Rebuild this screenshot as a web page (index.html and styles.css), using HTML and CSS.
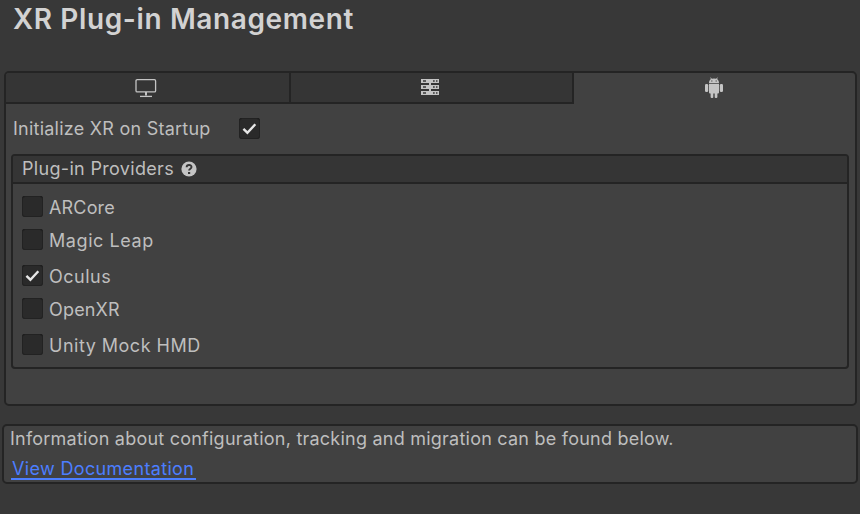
FILE: index.html
```html
<!DOCTYPE html>
<html lang="en">
<head>
<meta charset="utf-8">
<title>XR Plug-in Management</title>
<link rel="stylesheet" href="styles.css">
</head>
<body>
<h1 class="title">XR Plug-in Management</h1>
<section class="panel">
  <nav class="tabs">
    <div class="tab">
      <svg class="icon-monitor" width="22" height="20" viewBox="0 0 22 20" fill="none" stroke="#c4c4c4"><rect x="1" y="1.7" width="19.6" height="12.2" rx="1.2" stroke-width="1.3"/><path d="M11 14v3.5" stroke-width="2"/><path d="M5 18.4h12" stroke-width="1.3"/></svg>
    </div>
    <div class="tab">
      <svg width="18" height="18" viewBox="0 0 18 18"><path fill="#c4c4c4" d="M0 1h18v4H0zM0 7h18v4H0zM0 13h18v4H0zM8 5h2v2H8zM8 11h2v2H8z"/><path fill="#383838" d="M2 2.2h3v1.6H2zM12 2.2h1.7v1.6H12zM15 2.2h1.5v1.6H15zM2 8.2h3v1.6H2zM12 8.2h1.7v1.6H12zM15 8.2h1.5v1.6H15zM2 14.2h3v1.6H2zM12 14.2h1.7v1.6H12zM15 14.2h1.5v1.6H15z"/></svg>
    </div>
    <div class="tab active">
      <svg class="icon-android" width="18" height="22" viewBox="0 0 18 22" fill="#c4c4c4"><path d="M4 6C4 3.8 5 2.7 6.1 2L5 .8l.5-.4L6.9 1.700Q9 1.100 11.100 1.700L12.500.4l.5.4L11.900 2C13 2.700 14 3.800 14 6z"/><path d="M4 6.700h10v8.800q0 1-1 1H5q-1 0-1-1z"/><rect x="0" y="7" width="3.200" height="8" rx="1.300"/><rect x="14.800" y="7" width="3.200" height="8" rx="1.300"/><rect x="5.600" y="15" width="2.700" height="6" rx="1"/><rect x="9.700" y="15" width="2.700" height="6" rx="1"/><path fill="#414141" d="M6.200 3.500h1.200v1H6.200zM10.600 3.500h1.200v1h-1.200z"/></svg>
    </div>
  </nav>
  <div class="startup">
    <span class="startup-label">Initialize XR on Startup</span>
    <span class="check"><svg width="21" height="21" viewBox="0 0 21 21"><path d="M4.400 10.900 8.400 14.700 16.300 6.300"/></svg></span>
  </div>
  <div class="providers">
    <div class="providers-head">
      <span class="head-label">Plug-in Providers</span>
      <svg width="16" height="16" viewBox="0 0 16 16"><circle cx="8" cy="8" r="7.600" fill="#c4c4c4"/><path d="M5.600 6.300C5.700 3.300 10.500 3.300 10.500 6c0 1.700-2.400 1.700-2.400 3.600" fill="none" stroke="#353535" stroke-width="1.900"/><path fill="#353535" d="M7 11h2.200v2H7z"/></svg>
    </div>
    <ul class="list">
      <li><span class="check"></span><span class="tight">ARCore</span></li>
      <li class="wide"><span class="check"></span><span class="loose">Magic Leap</span></li>
      <li><span class="check"><svg width="21" height="21" viewBox="0 0 21 21"><path d="M4.400 10.900 8.400 14.700 16.300 6.300"/></svg></span><span>Oculus</span></li>
      <li class="wide"><span class="check"></span><span class="tight">OpenXR</span></li>
      <li><span class="check"></span><span>Unity Mock HMD</span></li>
    </ul>
  </div>
</section>
<section class="info">
  <p class="info-text">Information about configuration, tracking and migration can be found below.</p>
  <a class="link">View Documentation</a>
</section>
</body>
</html>
```
FILE: styles.css
```css
* { box-sizing: border-box; }
body {
  margin: 0;
  height: 514px;
  overflow: hidden;
  background: #383838;
  color: #bebebe;
  font: 400 18px/22px Inter, "Liberation Sans", sans-serif;
  letter-spacing: 0.5px;
  white-space: nowrap;
}
svg { display: block; flex: none; }
.title {
  margin: 0;
  padding: 1px 0 0 13px;
  height: 71px;
  font-size: 28px;
  line-height: 36px;
  font-weight: 600;
  letter-spacing: 0.62px;
  color: #d2d2d2;
}
.panel {
  width: 853px;
  height: 335px;
  margin-left: 4px;
  border: 2px solid #242424;
  border-radius: 5px;
  background: #414141;
}
.tabs { display: grid; grid-template-columns: 285px 283px 281px; height: 31px; }
.tab {
  display: flex;
  align-items: center;
  justify-content: center;
  padding: 0 3px 1px 0;
  background: #353535;
  border-right: 2px solid #242424;
  border-bottom: 2px solid #242424;
}
.tab:first-child { border-top-left-radius: 3px; }
.tab.active { padding: 0 1px 1px 0; background: none; border: 0; }
.icon-monitor { margin-top: 1px; }
.startup { display: flex; height: 50px; padding: 14px 0 0 7px; }
.startup-label { width: 226px; letter-spacing: 0.24px; }
.check {
  width: 21px;
  height: 21px;
  flex: none;
  border-radius: 3px;
  background: #2a2a2a;
  box-shadow: inset 0 0 0 1px #222, inset 0 2px 0 -1px #111;
}
.check path { fill: none; stroke: #e6e6e6; stroke-width: 2.400; }
.providers {
  width: 838px;
  height: 215px;
  margin-left: 5px;
  border: 2px solid #242424;
  border-radius: 4px;
}
.providers-head {
  display: flex;
  align-items: center;
  height: 28px;
  padding-left: 9px;
  border-bottom: 2px solid #242424;
  border-radius: 2px 2px 0 0;
  background: #353535;
}
.head-label { width: 159px; letter-spacing: 0.32px; }
.list { margin: 0; padding: 12px 0 0 9px; list-style: none; }
.list li { display: flex; height: 33px; gap: 6px; }
.list li.wide { height: 36px; }
.list li span:last-child { padding-top: 1px; }
.list .tight { letter-spacing: 0.17px; }
.list .loose { letter-spacing: 0.58px; }
.info {
  width: 856px;
  height: 60px;
  margin: 18px 0 0 2px;
  padding: 2px 0 0 6px;
  border: 2px solid #242424;
  border-radius: 5px;
  background: #414141;
}
.info-text { margin: 0 0 7px; letter-spacing: 0.23px; }
.link {
  display: block;
  width: 185px;
  height: 23px;
  margin-left: 1px;
  padding-left: 1px;
  line-height: 24px;
  letter-spacing: 0.34px;
  color: #4c7eff;
  border-bottom: 2px solid #4c7eff;
}
```
